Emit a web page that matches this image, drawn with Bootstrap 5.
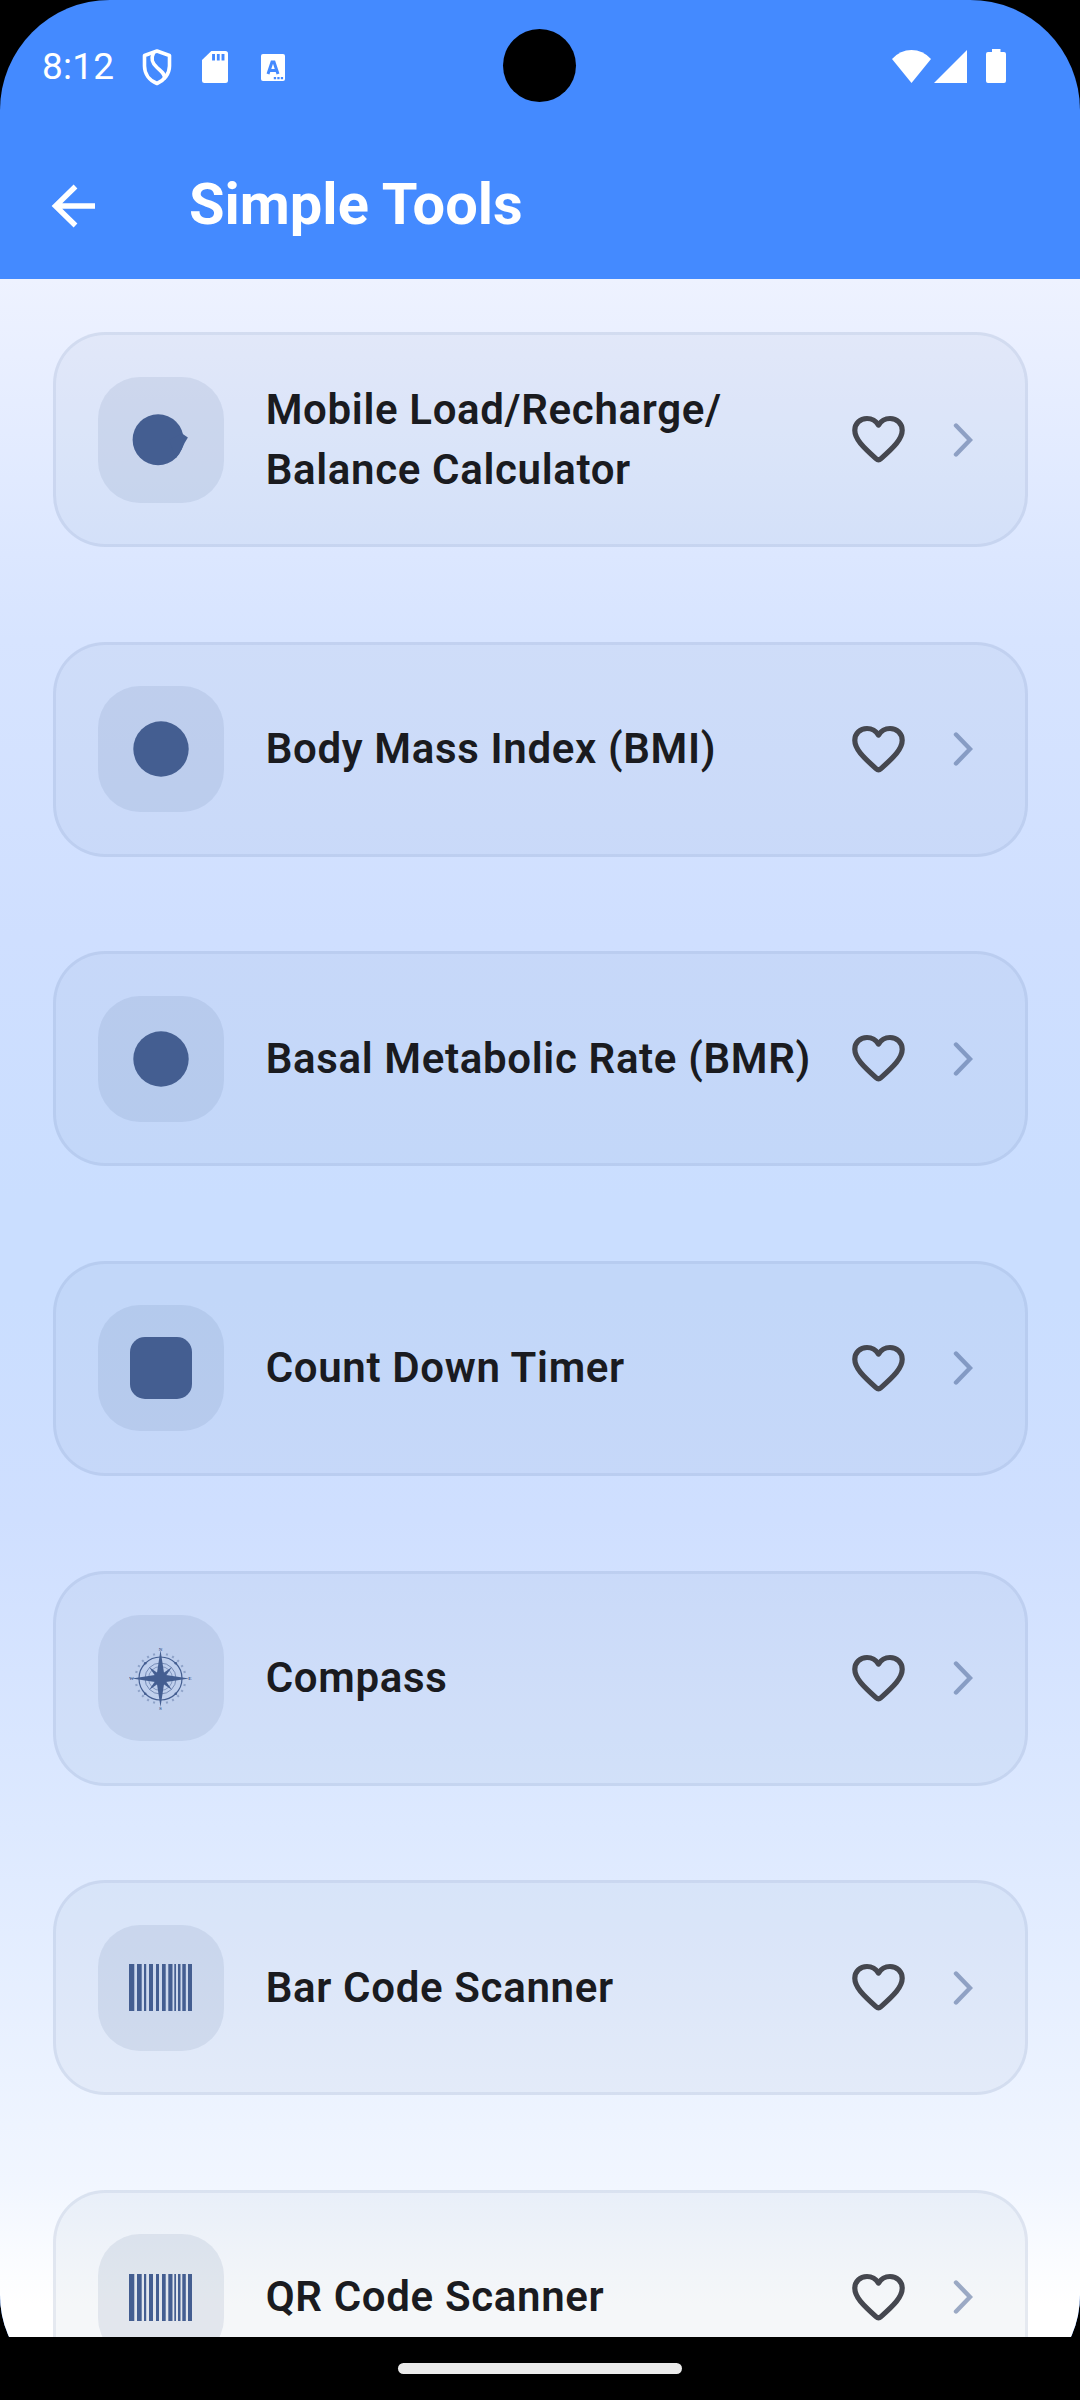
<!DOCTYPE html>
<html lang="en">
<head>
<meta charset="utf-8">
<meta name="viewport" content="width=device-width, initial-scale=1">
<title>Simple Tools</title>
<link href="https://cdn.jsdelivr.net/npm/bootstrap@5.3.0/dist/css/bootstrap.min.css" rel="stylesheet">
<style>
html,body{height:2400px;margin:0;background:#000;overflow:hidden}
body{font-family:Roboto,"Liberation Sans",sans-serif}
.phone{height:2400px;width:1080px;background:#000}
.screen{height:2337px;overflow:hidden}
.glass{height:2397px;border-radius:110px 110px 102px 102px;background:#448aff}
.status{height:132px;padding:0 66px 0 42px;color:#fff}
.clock{font-size:37px;line-height:1;letter-spacing:.2px;width:71px}
.lens{width:73px;height:73px;left:503px;top:29px;background:#000}
.shield{margin:1px 0 0 23px}
.sdcard{margin:2px 0 0 24px}
.akey{margin:2px 0 0 33px}
.wave{margin-right:3px}
.battery{margin:0 8px 0 19px}
.appbar{height:147px;padding-left:38px}
.appbar h1{font-size:57.75px;font-weight:700;color:#fff;line-height:1;letter-spacing:0;margin:0 0 2px 79px}
.tools{height:2121px;padding:53px 52.4px 0 53px;gap:94.67px;background:linear-gradient(#eef2ff 0,#dce7ff 13%,#d7e4ff 17%,#cfdfff 31%,#cadeff 43.5%,#cadeff 48%,#cfdfff 58.5%,#dde9ff 73%,#f1f6ff 89.6%,#fff 95.5%)}
.tool{height:215px;flex:none;border:3px solid rgba(68,94,145,.09);border-radius:52px;background:rgba(68,94,145,.05);padding:0 41px 0 41.7px}
.tile{width:126px;height:126px;border-radius:42px;background:rgba(68,94,145,.105);flex:none}
.name{font-size:42px;font-weight:600;line-height:60px;color:#1a1b20;margin-left:42px;letter-spacing:.66px;white-space:nowrap}
.chevron{margin:0 11px 0 43px;opacity:.5}
.home-pill{width:284px;height:11px;background:#ebebeb}
.navbar-zone{height:63px;background:#000}
svg{display:block;flex:none}
</style>
<script src="https://cdn.jsdelivr.net/npm/bootstrap@5.3.0/dist/js/bootstrap.bundle.min.js"></script>
</head>
<body>
<svg width="0" height="0" class="position-absolute" aria-hidden="true">
<defs>
<symbol id="heart" viewBox="0 0 63 63"><path d="M31.500 17C29 13 24.500 10.500 20 10.500 13 10.500 7.800 15.500 7.800 22.300 7.800 31 16 39 29 50.600Q31.500 52.800 34 50.600C47 39 55.200 31 55.200 22.300 55.200 15.500 50 10.500 43 10.500 38.500 10.500 34 13 31.500 17Z" fill="none" stroke="#45474f" stroke-width="5.200" stroke-linejoin="round"/></symbol>
<symbol id="chev" viewBox="0 0 20 36"><path d="M3 3.500 17 18 3 32.500" fill="none" stroke="#445e91" stroke-width="4.400" stroke-linecap="round" stroke-linejoin="miter"/></symbol>
<symbol id="bars" viewBox="0 0 63 47"><path fill="#445e91" d="M0 0h5.300v47H0zM8 0h4.700v47H8zM15 0h2.200v47H15zM20 0h4v47h-4zM27 0h3v47h-3zM33 0h3.700v47H33zM39.300 0h4.200v47h-4.200zM45.300 0h1.700v47h-1.700zM49 0h2.500v47H49zM53.300 0h3.500v47h-3.500zM59 0h4v47h-4z"/></symbol>
</defs>
</svg>
<div class="phone d-flex flex-column position-relative">
<div class="screen">
<div class="glass overflow-hidden">
<div class="status d-flex align-items-center">
<span class="clock">8:12</span>
<svg class="shield" width="42" height="42" viewBox="0 0 42 42"><g fill="none" stroke="#fff" stroke-width="3.600" stroke-linejoin="round" stroke-linecap="round"><path d="M21 5 33.500 9.500v10.500c0 8-5.500 14.500-12.500 17.500C13.500 34.500 8.500 28 8.500 20V9.500Z"/><path d="M17.500 7C14.500 13 16 17 21 21.500s8 6.500 7.500 10.500"/></g></svg>
<svg class="sdcard" width="26" height="32" viewBox="0 0 25 32" preserveAspectRatio="none"><path fill="#fff" d="M9 0h13.500A2.500 2.500 0 0 1 25 2.500v27a2.500 2.500 0 0 1-2.500 2.500h-20A2.500 2.500 0 0 1 0 29.500V9Z"/><path fill="#448aff" d="M9.700 3h2.800v6.500H9.700zM14.300 3H17v6.500h-2.700zM18.800 3h2.800v6.500h-2.800z"/></svg>
<svg class="akey" width="24" height="27" viewBox="0 0 24 27"><rect width="24" height="27" rx="2" fill="#fff"/><path d="M7 20 11 8h2l4 12M9 16.500h6" fill="none" stroke="#448aff" stroke-width="3"/><path fill="#448aff" d="M12.800 23h2.300v2.300h-2.300zM16.300 23h2.300v2.300h-2.300zM19.800 23h2.300v2.300h-2.300z"/></svg>
<svg class="wave ms-auto" width="39" height="33" viewBox="0 0 38 33" preserveAspectRatio="none"><path fill="#fff" d="M0 9Q8 0 19 0t19 9L19 33Z"/></svg>
<svg width="33" height="33" viewBox="0 0 33 33"><path fill="#fff" d="M33 0v33H0Z"/></svg>
<svg class="battery" width="20" height="34" viewBox="0 0 20 34"><path fill="#fff" d="M6 0h8.500v3H18a2 2 0 0 1 2 2v27a2 2 0 0 1-2 2H2a2 2 0 0 1-2-2V5a2 2 0 0 1 2-2h4Z"/></svg>
</div>
<header class="appbar d-flex align-items-center">
<svg width="72" height="72" viewBox="0 0 72 72"><path d="M57 36H19M37.500 16.500 17.500 36 37.500 55.500" fill="none" stroke="#fff" stroke-width="5.400"/></svg>
<h1>Simple Tools</h1>
</header>
<main class="tools d-flex flex-column" id="tools"></main>
</div>
</div>
<footer class="navbar-zone d-flex align-items-center justify-content-center"><div class="home-pill rounded-pill"></div></footer>
<div class="lens rounded-circle position-absolute"></div>
</div>
<script>
// Compass rose: rings, degree marks, small diagonal star, main star.
var marks='';
for(var a=0;a<360;a+=15){if(a%90)marks+='<path d="M31.500 5.500v2.200" transform="rotate('+a+' 31.500 31.500)" stroke-width="2" opacity=".4"/>';}
var compass='<svg width="63" height="63" viewBox="0 0 63 63"><g fill="none" stroke="#445e91"><circle cx="31.500" cy="31.500" r="21.500" stroke-width="1.200"/><circle cx="31.500" cy="31.500" r="15.500" stroke-width=".6"/><circle cx="31.500" cy="31.500" r="12" stroke-width=".5"/>'+marks+'</g><g fill="#445e91"><path d="M20 20l11.500 8L43 20l-8 11.500L43 43l-11.500-8L20 43l8-11.500Z"/><path d="M31.500 3l3.800 24.700 24.700 3.800-24.700 3.800-3.800 24.700-3.800-24.700L3 31.500l24.700-3.800Z"/><circle cx="16.200" cy="16.200" r="1.300"/><circle cx="46.800" cy="16.200" r="1.300"/><circle cx="16.200" cy="46.800" r="1.300"/><circle cx="46.800" cy="46.800" r="1.300"/></g><g fill="#445e91" font-family="Liberation Serif,serif" font-weight="700" font-size="5" text-anchor="middle"><text x="31.500" y="3.500">N</text><text x="31.500" y="63">S</text><text x="61" y="33.200">E</text><text x="2.500" y="33.200">W</text></g></svg>';
var disc='<svg width="56" height="56"><circle cx="28" cy="28" r="27.700" fill="#445e91"/></svg>';
var coin='<svg width="63" height="56" viewBox="0 0 63 56"><g fill="#445e91"><circle cx="29.100" cy="27.800" r="25.500"/><path d="M53 21.500 58.900 25.500Q55.500 30.500 53.100 36.500L47 46 40 28Z"/></g></svg>';
var block='<svg width="62" height="62"><rect width="62" height="62" rx="15" fill="#445e91"/></svg>';
var bars='<svg width="63" height="47"><use href="#bars"/></svg>';
[['Mobile Load/Recharge/<br>Balance Calculator',coin],['Body Mass Index (BMI)',disc],['Basal Metabolic Rate (BMR)',disc],['Count Down Timer',block],['Compass',compass],['Bar Code Scanner',bars],['QR Code Scanner',bars]].forEach(function(t){
document.getElementById('tools').insertAdjacentHTML('beforeend','<div class="tool d-flex align-items-center"><div class="tile d-flex align-items-center justify-content-center">'+t[1]+'</div><div class="name">'+t[0]+'</div><svg class="ms-auto" width="63" height="63"><use href="#heart"/></svg><svg class="chevron" width="20" height="36"><use href="#chev"/></svg></div>');
});
</script>
</body>
</html>
